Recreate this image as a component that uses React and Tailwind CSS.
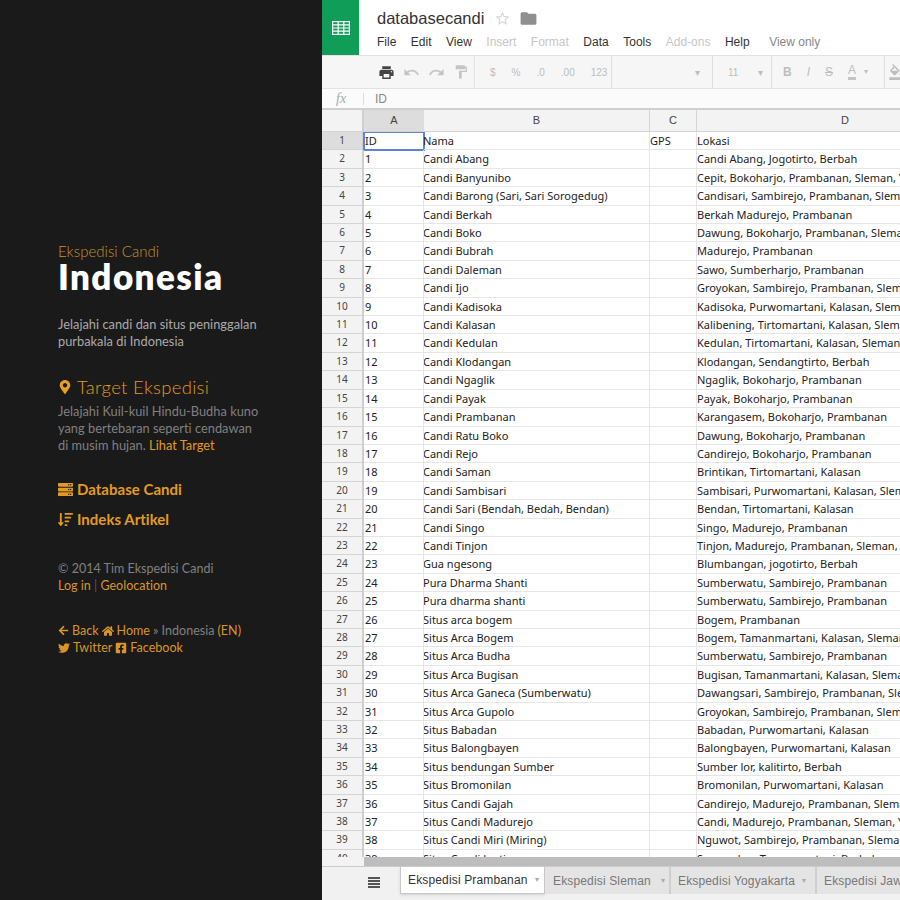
import { FaMapMarkerAlt, FaServer, FaSortAmountDown, FaArrowLeft, FaHome, FaTwitter, FaFacebookSquare } from 'react-icons/fa';
import { MdPrint, MdUndo, MdRedo, MdFormatPaint, MdFormatColorFill, MdStarBorder, MdFolder } from 'react-icons/md';

const rows = [
  ['ID', 'Nama', 'GPS', 'Lokasi'],
  ['1', 'Candi Abang', '', 'Candi Abang, Jogotirto, Berbah'],
  ['2', 'Candi Banyunibo', '', 'Cepit, Bokoharjo, Prambanan, Sleman, Yogyakarta'],
  ['3', 'Candi Barong (Sari, Sari Sorogedug)', '', 'Candisari, Sambirejo, Prambanan, Sleman'],
  ['4', 'Candi Berkah', '', 'Berkah Madurejo, Prambanan'],
  ['5', 'Candi Boko', '', 'Dawung, Bokoharjo, Prambanan, Sleman'],
  ['6', 'Candi Bubrah', '', 'Madurejo, Prambanan'],
  ['7', 'Candi Daleman', '', 'Sawo, Sumberharjo, Prambanan'],
  ['8', 'Candi Ijo', '', 'Groyokan, Sambirejo, Prambanan, Sleman'],
  ['9', 'Candi Kadisoka', '', 'Kadisoka, Purwomartani, Kalasan, Sleman'],
  ['10', 'Candi Kalasan', '', 'Kalibening, Tirtomartani, Kalasan, Sleman'],
  ['11', 'Candi Kedulan', '', 'Kedulan, Tirtomartani, Kalasan, Sleman'],
  ['12', 'Candi Klodangan', '', 'Klodangan, Sendangtirto, Berbah'],
  ['13', 'Candi Ngaglik', '', 'Ngaglik, Bokoharjo, Prambanan'],
  ['14', 'Candi Payak', '', 'Payak, Bokoharjo, Prambanan'],
  ['15', 'Candi Prambanan', '', 'Karangasem, Bokoharjo, Prambanan'],
  ['16', 'Candi Ratu Boko', '', 'Dawung, Bokoharjo, Prambanan'],
  ['17', 'Candi Rejo', '', 'Candirejo, Bokoharjo, Prambanan'],
  ['18', 'Candi Saman', '', 'Brintikan, Tirtomartani, Kalasan'],
  ['19', 'Candi Sambisari', '', 'Sambisari, Purwomartani, Kalasan, Sleman'],
  ['20', 'Candi Sari (Bendah, Bedah, Bendan)', '', 'Bendan, Tirtomartani, Kalasan'],
  ['21', 'Candi Singo', '', 'Singo, Madurejo, Prambanan'],
  ['22', 'Candi Tinjon', '', 'Tinjon, Madurejo, Prambanan, Sleman, Yogyakarta'],
  ['23', 'Gua ngesong', '', 'Blumbangan, jogotirto, Berbah'],
  ['24', 'Pura Dharma Shanti', '', 'Sumberwatu, Sambirejo, Prambanan'],
  ['25', 'Pura dharma shanti', '', 'Sumberwatu, Sambirejo, Prambanan'],
  ['26', 'Situs arca bogem', '', 'Bogem, Prambanan'],
  ['27', 'Situs Arca Bogem', '', 'Bogem, Tamanmartani, Kalasan, Sleman'],
  ['28', 'Situs Arca Budha', '', 'Sumberwatu, Sambirejo, Prambanan'],
  ['29', 'Situs Arca Bugisan', '', 'Bugisan, Tamanmartani, Kalasan, Sleman'],
  ['30', 'Situs Arca Ganeca (Sumberwatu)', '', 'Dawangsari, Sambirejo, Prambanan, Sleman'],
  ['31', 'Situs Arca Gupolo', '', 'Groyokan, Sambirejo, Prambanan, Sleman'],
  ['32', 'Situs Babadan', '', 'Babadan, Purwomartani, Kalasan'],
  ['33', 'Situs Balongbayen', '', 'Balongbayen, Purwomartani, Kalasan'],
  ['34', 'Situs bendungan Sumber', '', 'Sumber lor, kalitirto, Berbah'],
  ['35', 'Situs Bromonilan', '', 'Bromonilan, Purwomartani, Kalasan'],
  ['36', 'Situs Candi Gajah', '', 'Candirejo, Madurejo, Prambanan, Sleman'],
  ['37', 'Situs Candi Madurejo', '', 'Candi, Madurejo, Prambanan, Sleman, Yogyakarta'],
  ['38', 'Situs Candi Miri (Miring)', '', 'Nguwot, Sambirejo, Prambanan, Sleman'],
  ['39', 'Situs Candi Janti', '', 'Sorogedug, Tamanmartani, Berbah'],
];

function Sidebar() {
  return (
    <aside className="w-[322px] shrink-0 h-full bg-[#1a1a1a] pl-[58px] pt-[243px] font-['Lato',sans-serif] text-[13px] leading-[17px] text-[#8a8a8a] font-light tracking-[0.02px] whitespace-nowrap">
      <div className="text-[15px] leading-[16px] text-[#c8922e]">Ekspedisi Candi</div>
      <h1 className="text-[35px] leading-[34px] font-extrabold text-white tracking-[1.4px]">Indonesia</h1>
      <p className="mt-[23px] text-[#aaaaaa] font-normal text-[12.8px]">
        Jelajahi candi dan situs peninggalan<br />purbakala di Indonesia
      </p>
      <h2 className="mt-[26px] text-[18.5px] leading-[22px] text-[#e29a22] flex items-center gap-[5px] tracking-[0.3px]">
        <FaMapMarkerAlt size={14} className="text-[#e8a020]" /> Target Ekspedisi
      </h2>
      <p className="mt-[5px] text-[#808080] font-normal text-[12.8px]">
        Jelajahi Kuil-kuil Hindu-Budha kuno<br />
        yang bertebaran seperti cendawan<br />
        di musim hujan. <span className="text-[#e29a22]">Lihat Target</span>
      </p>
      <div className="mt-[26px] text-[15px] leading-[18px] font-bold text-[#e29a22] flex items-center gap-[4px]">
        <FaServer size={15} /> Database Candi
      </div>
      <div className="mt-[12px] text-[15px] leading-[18px] font-bold text-[#e29a22] flex items-center gap-[4px]">
        <FaSortAmountDown size={15} /> Indeks Artikel
      </div>
      <p className="mt-[32px] text-[#808080] font-normal text-[12.5px]">© 2014 Tim Ekspedisi Candi</p>
      <p className="text-[#d8952a] font-normal text-[12.5px]">Log in <span className="text-[#555555]">|</span> Geolocation</p>
      <div className="mt-[28px] text-[#d8952a] font-normal text-[12.5px]">
        <div className="flex items-center gap-[3px]">
          <FaArrowLeft size={11} /> Back <FaHome size={12} /> Home <span className="text-[#808080]">» Indonesia</span> (EN)
        </div>
        <div className="flex items-center gap-[3px]">
          <FaTwitter size={12} /> Twitter <FaFacebookSquare size={12} /> Facebook
        </div>
      </div>
    </aside>
  );
}

function Divider() {
  return <div className="w-px h-[33px] shrink-0 bg-[#e0e0e0]" />;
}

function Toolbar() {
  return (
    <div className="h-[34px] shrink-0 bg-[#f6f6f6] border-y border-[#e2e2e2] flex items-center text-[10px] text-[#bdbdbd] font-['Liberation_Sans',sans-serif] whitespace-nowrap overflow-hidden">
      <div className="w-[152px] shrink-0 flex items-center pl-[56px] gap-[8px] text-[#c4c4c4]">
        <MdPrint size={17} className="text-[#444444]" /><MdUndo size={17} /><MdRedo size={17} /><MdFormatPaint size={16} />
      </div>
      <Divider />
      <div className="w-[136px] shrink-0 flex items-center pl-[15px] gap-[16px]"><span>$</span><span>%</span><span>.0</span><span>.00</span><span>123</span></div>
      <Divider />
      <div className="w-[100px] shrink-0 flex justify-end pr-[12px]">▾</div>
      <Divider />
      <div className="w-[58px] shrink-0 pl-[15px] flex justify-between pr-[8px]"><span>11</span><span>▾</span></div>
      <Divider />
      <div className="w-[112px] shrink-0 flex items-center pl-[11px] gap-[15px] text-[12px]">
        <span className="font-bold">B</span><span className="italic">I</span><span className="line-through">S</span>
        <span className="border-b-[3px] border-[#c4c4c4] leading-[13px]">A</span><span className="text-[8px] -ml-[7px]">▾</span>
      </div>
      <Divider />
      <MdFormatColorFill size={16} className="ml-[3px] shrink-0" />
    </div>
  );
}

function SheetRow({ row, index }) {
  const first = index === 0;
  return (
    <div className="h-[18.42px] flex shrink-0">
      <div className={`w-[40px] shrink-0 text-center text-[10px] leading-[17px] text-[#444444] border-b border-[#d4d4d4] ${first ? 'bg-[#dddddd]' : 'bg-[#f3f3f3]'}`}>{index + 1}</div>
      <div className="w-[2px] shrink-0 bg-[#cfcfcf]" />
      <div className={`w-[60px] shrink-0 pl-px leading-[18px] border-r border-b border-[#e6e6e6] ${first ? 'outline-2 -outline-offset-1 outline-[#5b84d6]' : ''}`}>{row[0]}</div>
      <div className="w-[226px] shrink-0 indent-[-1px] leading-[18px] border-r border-b border-[#e6e6e6] whitespace-nowrap overflow-hidden">{row[1]}</div>
      <div className="w-[47px] shrink-0 leading-[18px] border-r border-b border-[#e6e6e6]">{row[2]}</div>
      <div className="flex-1 leading-[18px] border-b border-[#e6e6e6] whitespace-nowrap overflow-hidden">{row[3]}</div>
    </div>
  );
}

export default function App() {
  return (
    <div className="w-[900px] h-[900px] flex overflow-hidden bg-white">
      <Sidebar />
      <main className="flex-1 min-w-0 flex flex-col font-['Liberation_Sans',sans-serif]">
        {/* Docs header */}
        <header className="h-[55px] shrink-0 flex">
          <div className="w-[37px] bg-[#0f9d58] flex items-center justify-center shrink-0">
            <svg width="18" height="14" viewBox="0 0 18 14" fill="none" stroke="#ffffff" strokeWidth="1.2">
              <rect x="0.6" y="0.6" width="16.8" height="12.8" />
              <path d="M0.6 3.8H17.4M0.6 7H17.4M0.6 10.2H17.4M6.2 0.6V13.4M11.8 0.6V13.4" />
            </svg>
          </div>
          <div className="pl-[18px]">
            <div className="flex items-center h-[36px] pt-[1px]">
              <span className="text-[16.5px] text-[#333333]">databasecandi</span>
              <MdStarBorder size={17} className="ml-[10px] text-[#d6d6d6]" />
              <MdFolder size={19} className="ml-[8px] text-[#8f8f8f]" />
            </div>
            <nav className="flex text-[12px] leading-[12px] text-[#333333] gap-[14.5px] whitespace-nowrap">
              <span>File</span><span>Edit</span><span>View</span>
              <span className="text-[#c6c6c6]">Insert</span><span className="text-[#c6c6c6]">Format</span>
              <span>Data</span><span>Tools</span><span className="text-[#c6c6c6]">Add-ons</span><span>Help</span>
              <span className="text-[#888888] ml-[5px]">View only</span>
            </nav>
          </div>
        </header>

        <Toolbar />

        {/* Formula bar */}
        <div className="h-[21px] shrink-0 flex items-center bg-[#fbfbfb] border-b-2 border-[#cfcfcf] text-[12px] text-[#888888]">
          <span className="w-[41px] pl-[14px] italic font-['Liberation_Serif',serif] text-[14px] text-[#aaaaaa]">fx</span>
          <span className="w-px h-[12px] bg-[#dddddd]" />
          <span className="pl-[11px]">ID</span>
        </div>

        {/* Column headers */}
        <div className="h-[22px] shrink-0 flex text-[11px] leading-[21px] text-[#444444] text-center bg-[#f3f3f3] border-b border-[#d4d4d4]">
          <div className="w-[40px] shrink-0" />
          <div className="w-[2px] shrink-0 bg-[#cfcfcf]" />
          <div className="w-[60px] shrink-0 bg-[#dddddd]">A</div>
          <div className="w-[226px] shrink-0 border-r border-[#d4d4d4]">B</div>
          <div className="w-[47px] shrink-0 border-r border-[#d4d4d4]">C</div>
          <div className="w-[296px] shrink-0">D</div>
        </div>

        {/* Rows */}
        <div className="flex-1 min-h-0 overflow-hidden flex flex-col font-['Noto_Sans',sans-serif] text-[11px] text-[#222222]">
          {rows.map((row, i) => <SheetRow key={i} row={row} index={i} />)}
        </div>

        {/* Scrollbar */}
        <div className="h-[9px] shrink-0 flex">
          <div className="w-[42px] bg-[#f3f3f3]" />
          <div className="flex-1 bg-[#bdbdbd]" />
        </div>

        {/* Sheet tabs */}
        <footer className="h-[34px] shrink-0 bg-[#f1f1f1] border-t border-[#cccccc] flex items-start text-[12px] tracking-[0.15px] whitespace-nowrap overflow-hidden">
          <div className="w-[78px] shrink-0 flex justify-center pt-[10px] pl-[26px]">
            <div className="w-[12px] h-[11px] border-y-[5px] border-double border-[#555555]" />
          </div>
          <div className="h-[27px] w-[145px] shrink-0 bg-white border border-t-0 border-[#c8c8c8] shadow-sm flex items-center pl-[7px] text-[#333333]">
            Ekspedisi Prambanan <span className="ml-[7px] text-[8px] text-[#aaaaaa]">▾</span>
          </div>
          <div className="h-[27px] w-[126px] shrink-0 bg-[#e4e4e4] border-r-2 border-[#cfcfcf] flex items-center pl-[8px] text-[#777777]">
            Ekspedisi Sleman <span className="ml-[10px] text-[8px] text-[#aaaaaa]">▾</span>
          </div>
          <div className="h-[27px] w-[146px] shrink-0 bg-[#e4e4e4] border-r-2 border-[#cfcfcf] flex items-center pl-[7px] text-[#777777]">
            Ekspedisi Yogyakarta <span className="ml-[7px] text-[8px] text-[#aaaaaa]">▾</span>
          </div>
          <div className="h-[27px] shrink-0 bg-[#e4e4e4] flex items-center pl-[7px] pr-[6px] text-[#777777]">Ekspedisi Jawa</div>
        </footer>
      </main>
    </div>
  );
}
